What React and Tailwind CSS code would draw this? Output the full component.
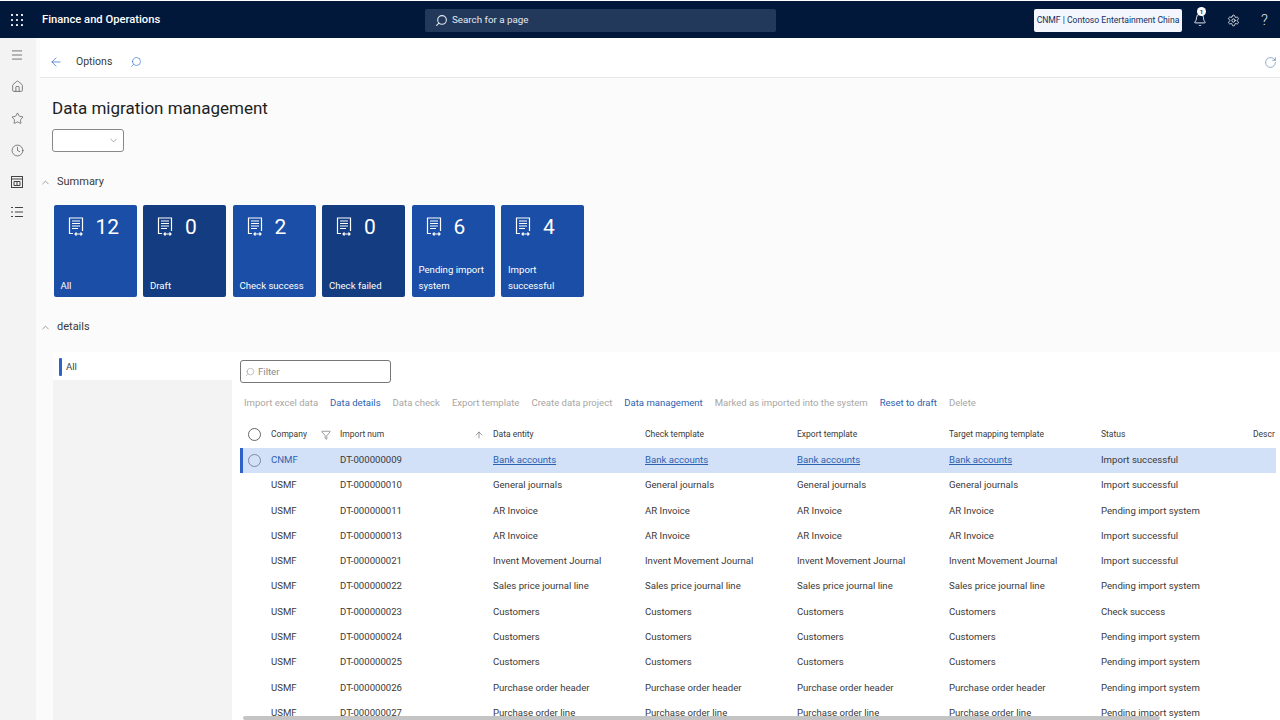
import React from "react";
import { Menu, Home, Star, Clock, ArrowLeft, Search, ChevronDown, ChevronUp, Bell, Settings, Filter, ArrowUp, RotateCw } from "lucide-react";

const rows = [
  ["USMF", "DT-000000010", "General journals", "Import successful"],
  ["USMF", "DT-000000011", "AR Invoice", "Pending import system"],
  ["USMF", "DT-000000013", "AR Invoice", "Import successful"],
  ["USMF", "DT-000000021", "Invent Movement Journal", "Import successful"],
  ["USMF", "DT-000000022", "Sales price journal line", "Pending import system"],
  ["USMF", "DT-000000023", "Customers", "Check success"],
  ["USMF", "DT-000000024", "Customers", "Pending import system"],
  ["USMF", "DT-000000025", "Customers", "Pending import system"],
  ["USMF", "DT-000000026", "Purchase order header", "Pending import system"],
  ["USMF", "DT-000000027", "Purchase order line", "Pending import system"],
];

const tiles = [
  ["12", "All", "bg-[#1b4ea6]"],
  ["0", "Draft", "bg-[#143c80]"],
  ["2", "Check success", "bg-[#1b4ea6]"],
  ["0", "Check failed", "bg-[#143c80]"],
  ["6", "Pending import system", "bg-[#1b4ea6]"],
  ["4", "Import successful", "bg-[#1b4ea6]"],
];

const actions = [
  ["Import excel data", false],
  ["Data details", true],
  ["Data check", false],
  ["Export template", false],
  ["Create data project", false],
  ["Data management", true],
  ["Marked as imported into the system", false],
  ["Reset to draft", true],
  ["Delete", false],
];

function TileIcon() {
  return (
    <svg width="16" height="20" viewBox="0 0 16 20" fill="none" stroke="white" strokeWidth="1.2">
      <path d="M5 16.5H1.5V1h13v13" />
      <path d="M4 4h8M4 6.5h8M4 9h8M4 11.5h6" />
      <path d="M7 17h7M8.5 15.5 7 17l1.5 1.5M12.5 15.5 14 17l-1.5 1.5" />
    </svg>
  );
}

function WaffleIcon() {
  return (
    <svg width="12" height="12" viewBox="0 0 12 12" fill="white">
      {[1, 6, 11].flatMap((x) =>
        [1, 6, 11].map((y) => <circle key={`${x}-${y}`} cx={x} cy={y} r="1.1" />)
      )}
    </svg>
  );
}

function WorkspaceIcon() {
  return (
    <svg width="12" height="12" viewBox="0 0 12 12" fill="none" stroke="#444" strokeWidth="1">
      <rect x="0.5" y="0.5" width="11" height="11" />
      <path d="M0.5 3h11M3 5.5h6v4H3zM6 5.5v4" />
    </svg>
  );
}

function ModulesIcon() {
  return (
    <svg width="12" height="12" viewBox="0 0 12 12" fill="none" stroke="#444" strokeWidth="1">
      <path d="M0 1.5h2M4 1.5h8M0 6h2M4 6h8M0 10.5h2M4 10.5h8" />
    </svg>
  );
}

const grid = "grid grid-cols-[31px_69px_153px_152px_152px_152px_152px_152px_152px]";

export default function App() {
  return (
    <div className="h-[720px] w-[1280px] overflow-hidden bg-[#fbfbfb] font-['Roboto',sans-serif] text-[#3b3a39] flex flex-col">
      <header className="h-[38px] shrink-0 bg-[#02183a] border-t border-white pt-[1px] flex items-center text-white">
        <div className="w-[34px] flex justify-center"><WaffleIcon /></div>
        <div className="ml-[8px] w-[383px] text-[11.2px] font-medium">Finance and Operations</div>
        <div className="w-[351px] h-[23px] rounded-[2px] bg-[#23395c] flex items-center pl-[10px] gap-[4px] text-[9.8px] text-[#e4e8ee]">
          <Search size={13} className="-scale-x-100" />
          <span className="pt-[1px]">Search for a page</span>
        </div>
        <div className="ml-[258px] w-[148px] h-[23px] rounded-[2px] bg-[#f3f6fc] text-[#0f2f66] text-[8.6px] flex items-center justify-center whitespace-nowrap">
          CNMF | Contoso Entertainment China
        </div>
        <div className="relative ml-[11px] w-[13px]">
          <Bell size={14} strokeWidth={1.5} />
          <span className="absolute -top-[6px] left-[4px] w-[9px] h-[9px] rounded-full bg-white text-[#02183a] text-[6px] font-semibold flex items-center justify-center">1</span>
        </div>
        <Settings size={13} className="ml-[21px]" strokeWidth={1.5} />
        <span className="ml-[21px] text-[15px] font-light text-[#dde2ea]">?</span>
      </header>

      <div className="flex-1 flex min-h-0">
        <nav className="w-[36px] shrink-0 bg-[#f3f3f3] flex flex-col items-center pt-[10px] pr-[2px] gap-[18.9px] text-[#444]">
          <Menu size={14} strokeWidth={1.2} />
          <Home size={13} strokeWidth={1.2} className="-mt-[1px]" />
          <Star size={13} strokeWidth={1.2} />
          <Clock size={13} strokeWidth={1.2} />
          <WorkspaceIcon />
          <ModulesIcon />
        </nav>

        <main className="flex-1 min-w-0 flex flex-col">
          <div className="h-[40px] shrink-0 bg-white border-b border-[#e6e6e6] flex items-center pl-[9px] pr-[3px] pt-[9px] ml-[4px]">
            <ArrowLeft size={14} className="text-[#2266c4]" strokeWidth={1.2} />
            <span className="ml-[13px] text-[10.5px]">Options</span>
            <Search size={12} className="ml-[18px] text-[#2266c4] -scale-x-100" strokeWidth={1.2} />
            <RotateCw size={13} className="ml-auto text-[#5a7fb5]" strokeWidth={1.2} />
          </div>

          <div className="flex-1 min-h-0 pl-[4px] flex flex-col">
            <h1 className="ml-[12px] mt-[17px] text-[17px] leading-[26px] font-normal text-[#201f1e]">Data migration management</h1>
            <div className="ml-[12px] mt-[8px] w-[72px] h-[23px] rounded-[3px] border border-[#8a8886] bg-white flex items-center justify-end pr-[4px]">
              <ChevronDown size={11} className="text-[#666]" strokeWidth={1.2} />
            </div>

            <div className="mt-[22px] h-[16px] flex items-center gap-[6px] text-[11px]">
              <ChevronUp size={11} className="text-[#555]" strokeWidth={1.2} />
              <span>Summary</span>
            </div>

            <div className="ml-[13.5px] mt-[15px] flex gap-[6.5px]">
              {tiles.map(([n, label, bg], i) => (
                <div key={i} className={`${bg} w-[83px] h-[92px] rounded-[2px] text-white px-[7px] pt-[10px] pb-[3px] flex flex-col justify-between`}>
                  <div className="flex items-center gap-[12px] pl-[7px]">
                    <TileIcon />
                    <span className="text-[21px] leading-[24px]">{n}</span>
                  </div>
                  <div className="text-[9.6px] leading-[16px]">{label}</div>
                </div>
              ))}
            </div>

            <div className="mt-[22px] h-[16px] flex items-center gap-[6px] text-[11px]">
              <ChevronUp size={11} className="text-[#555]" strokeWidth={1.2} />
              <span>details</span>
            </div>

            <div className="mt-[17px] flex flex-1 min-h-0 ml-[13px]">
              <aside className="w-[179px] shrink-0 flex flex-col">
                <div className="h-[28px] bg-white flex items-center pl-[6px] pt-[2px] gap-[4px] text-[9.6px] text-[#444]">
                  <span className="w-[3px] h-[18px] bg-[#2f62c8] rounded-[1px]"></span>
                  All
                </div>
                <div className="flex-1 bg-[#f3f3f3]"></div>
              </aside>

              <section className="flex-1 min-w-0 bg-white relative pl-[8px] overflow-hidden">
                <div className="mt-[8px] w-[151px] h-[23px] rounded-[3px] border border-[#777] bg-white flex items-center pl-[4px] pt-[1px] gap-[3px] text-[9.6px] text-[#8a8886]">
                  <Search size={10} className="-scale-x-100" strokeWidth={1.2} />
                  Filter
                </div>

                <div className="mt-[11px] h-[18px] pl-[4px] flex items-center gap-[12px] text-[9.55px] whitespace-nowrap">
                  {actions.map(([label, on]) => (
                    <span key={label} className={on ? "text-[#2c62b0]" : "text-[#a8a6a4]"}>{label}</span>
                  ))}
                </div>

                <div className={`${grid} mt-[10px] h-[25.5px] items-center text-[8.5px] whitespace-nowrap text-[#3b3a39]`}>
                  <div className="pl-[8px]"><span className="block w-[13px] h-[13px] rounded-full border border-[#666]"></span></div>
                  <div className="flex items-center justify-between pr-[9px]">Company <Filter size={10} strokeWidth={1.2} /></div>
                  <div className="flex items-center justify-between pr-[9px]">Import num <ArrowUp size={10} strokeWidth={1.2} /></div>
                  <div>Data entity</div>
                  <div>Check template</div>
                  <div>Export template</div>
                  <div>Target mapping template</div>
                  <div>Status</div>
                  <div>Descr</div>
                </div>

                <div className={`${grid} h-[25.3px] items-center text-[9.6px] whitespace-nowrap bg-[#d2e0f8] shadow-[inset_3px_0_0_#2f62c8] mr-[4px]`}>
                  <div className="pl-[8px]"><span className="block w-[13px] h-[13px] rounded-full border border-[#7a8aa5]"></span></div>
                  <div className="text-[#2c62b0]">CNMF</div>
                  <div>DT-000000009</div>
                  <div className="text-[#2c62b0] underline">Bank accounts</div>
                  <div className="text-[#2c62b0] underline">Bank accounts</div>
                  <div className="text-[#2c62b0] underline">Bank accounts</div>
                  <div className="text-[#2c62b0] underline">Bank accounts</div>
                  <div>Import successful</div>
                </div>

                {rows.map((r) => (
                  <div key={r[1]} className={`${grid} h-[25.3px] items-center text-[9.6px] whitespace-nowrap`}>
                    <div></div>
                    <div>{r[0]}</div>
                    <div>{r[1]}</div>
                    <div>{r[2]}</div>
                    <div>{r[2]}</div>
                    <div>{r[2]}</div>
                    <div>{r[2]}</div>
                    <div>{r[3]}</div>
                  </div>
                ))}

                <div className="absolute left-[11px] bottom-0 w-[917px] h-[4px] rounded-[2px] bg-[#c4c4c4]"></div>
              </section>
            </div>
          </div>
        </main>
      </div>
    </div>
  );
}
